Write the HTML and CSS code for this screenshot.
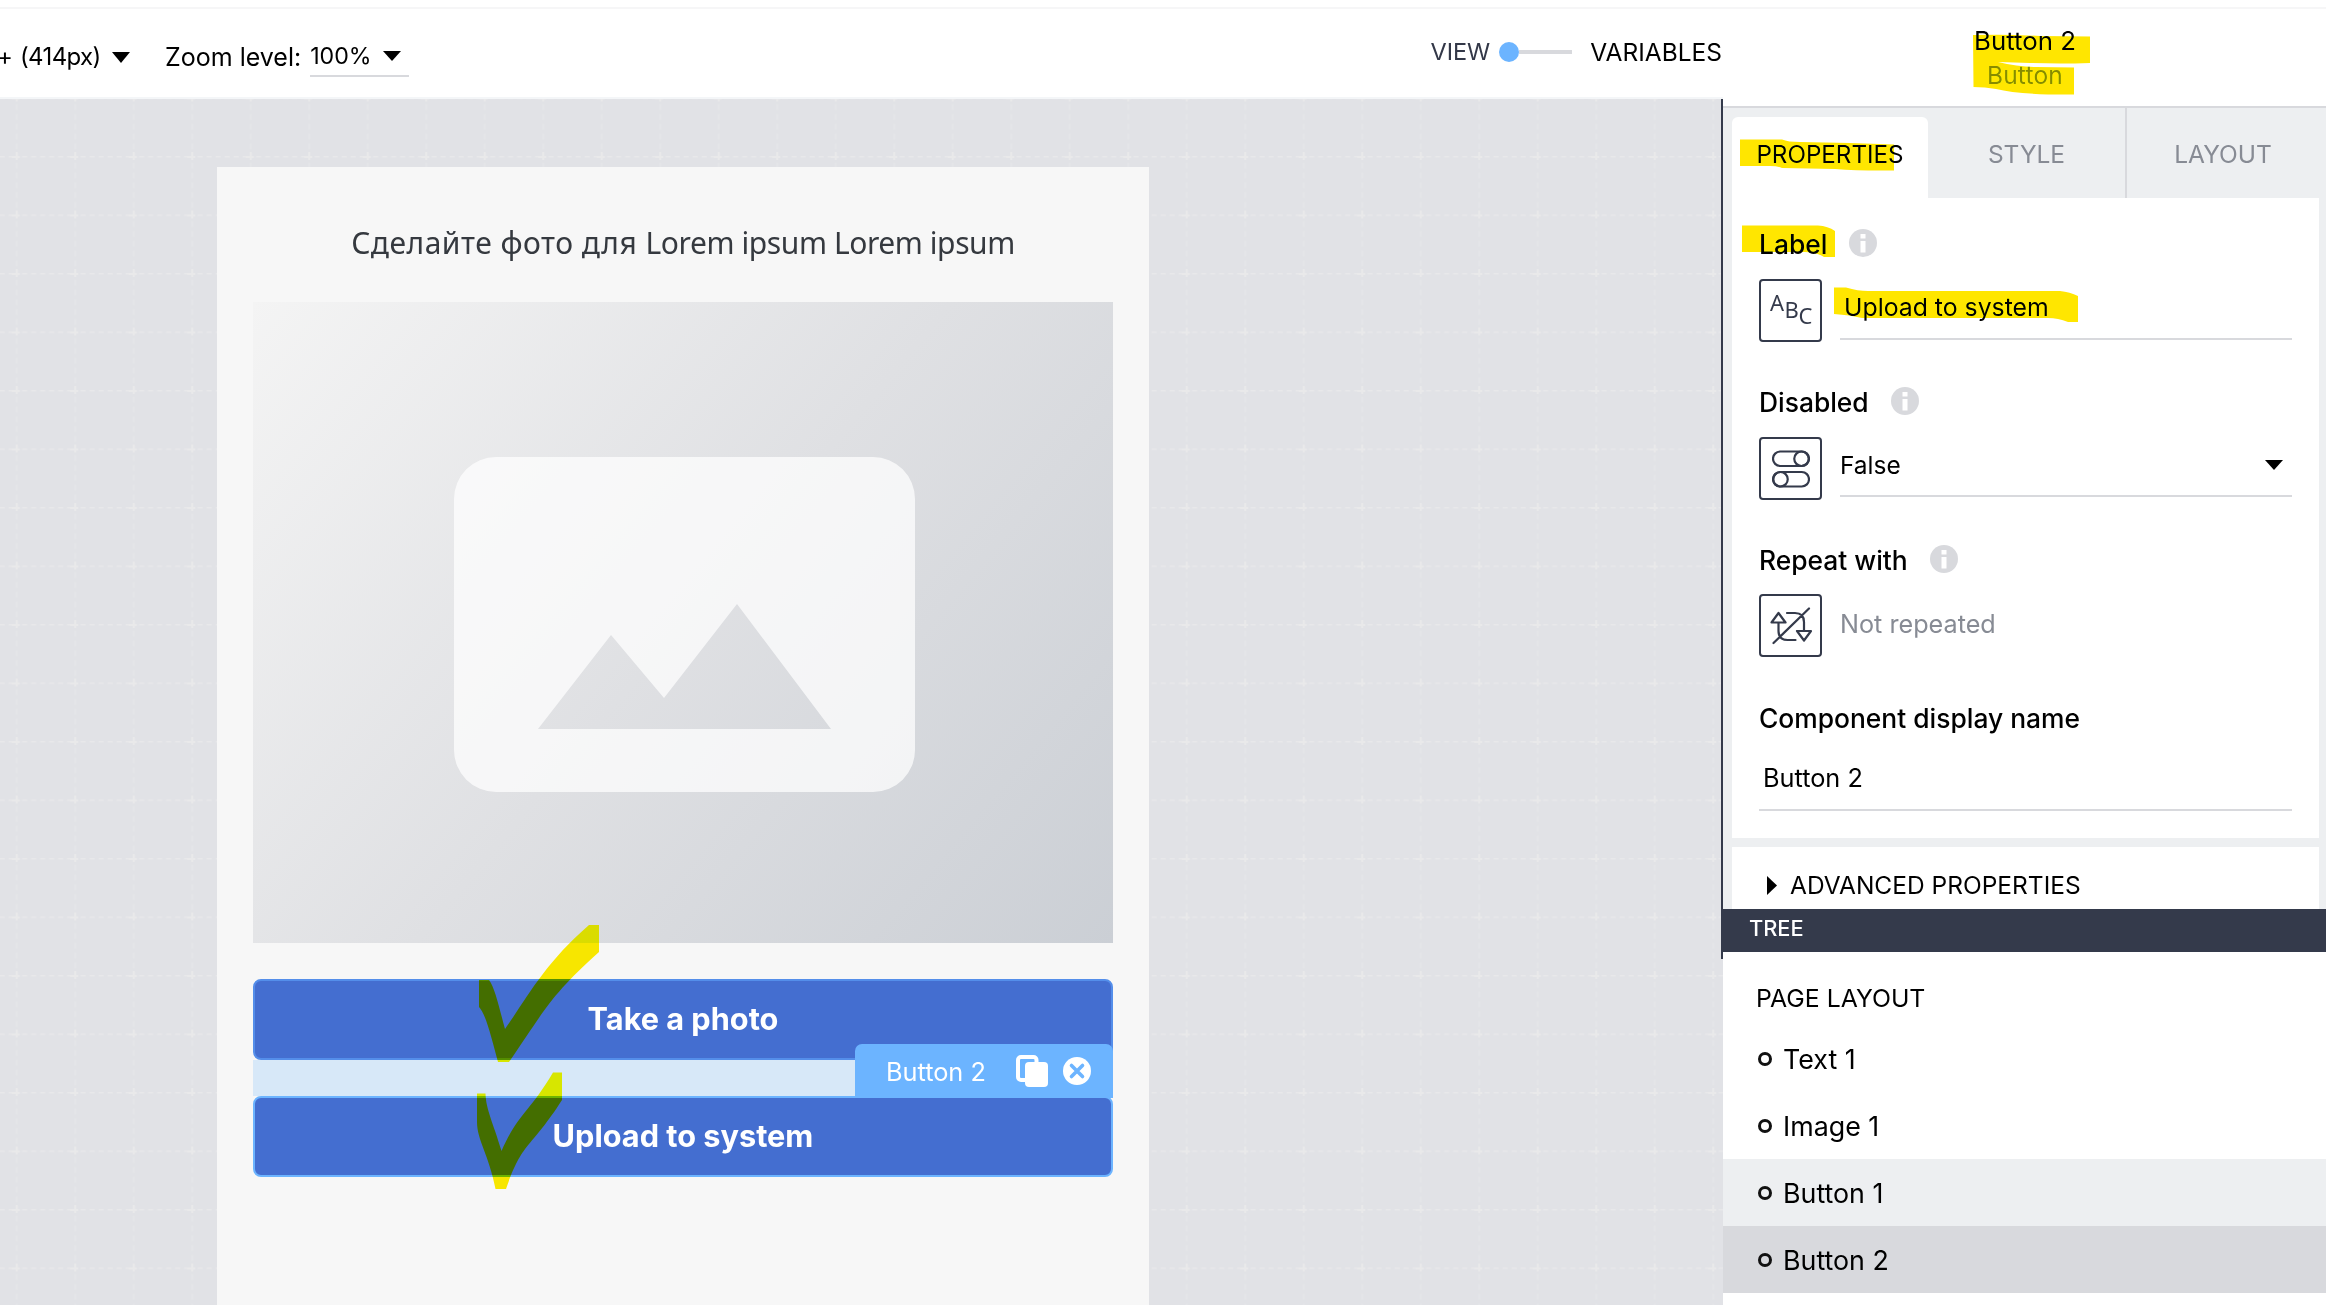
FILE: index.html
```html
<!DOCTYPE html>
<html lang="en">
<head>
<meta charset="utf-8">
<title>Page builder</title>
<link rel="stylesheet" href="styles.css">
</head>
<body>
<div class="app">
  <header class="topbar">
    <div class="toolbar">
      <div class="device">+ <span class="device-size">(414px)</span><svg class="caret caret-lg" viewBox="0 0 18 11"><path d="M0 0h18L9 11z"/></svg></div>
      <div class="zoom">Zoom level:
        <div class="zoom-select">100%<svg class="caret" viewBox="0 0 18 10"><path d="M0 0h18L9 10z"/></svg></div>
      </div>
      <div class="mode">
        <span class="mode-view">VIEW</span>
        <span class="switch"><i class="knob"></i><i class="track"></i></span>
        <span>VARIABLES</span>
      </div>
    </div>
    <div class="component-title">
      <div class="component-name">Button 2</div>
      <div class="component-type">Button</div>
    </div>
  </header>

  <main class="canvas">
    <svg class="grid-lines" width="100%" height="100%">
      <defs>
        <pattern id="grid" x="15.7" y="57" width="58.5" height="58.5" patternUnits="userSpaceOnUse">
          <path d="M0 0h58.5" stroke="#e8e8ea" stroke-width="3" stroke-dasharray="5 4" stroke-dashoffset="2.5"/>
          <path d="M0 0v58.5" stroke="#e4e5e8" stroke-width="4" stroke-dasharray="6 3.75" stroke-dashoffset="3"/>
          <path d="M0 0h4M54.5 0h4M0 0v4M0 54.5v4" stroke="#e9e9ea" stroke-width="4"/>
        </pattern>
      </defs>
      <rect width="100%" height="100%" fill="url(#grid)"/>
    </svg>
    <section class="page">
      <p class="page-text"><span class="wide">Сделайте фото для </span><span class="narrow">Lorem ipsum Lorem ipsum</span></p>
      <div class="placeholder">
        <svg width="461" height="335" viewBox="0 0 461 335">
          <path fill="#fff" fill-opacity=".72" fill-rule="evenodd" d="M42 0H419A42 42 0 0 1 461 42V293A42 42 0 0 1 419 335H42A42 42 0 0 1 0 293V42A42 42 0 0 1 42 0ZM84 272H377L283 147L210 241L157 178Z"/>
        </svg>
      </div>
      <button class="btn">Take a photo</button>
      <div class="spacer">
        <div class="tag">
          <span>Button 2</span>
          <svg class="icon-copy" width="32" height="32" viewBox="0 0 32 32"><path d="M9 25H5a3 3 0 0 1-3-3V5a3 3 0 0 1 3-3h12.500a3 3 0 0 1 3 3v3" fill="none" stroke="#fff" stroke-width="4"/><rect x="9" y="7" width="23" height="25" rx="4" fill="#fff"/></svg>
          <svg class="icon-close" width="28" height="28" viewBox="0 0 28 28"><circle cx="14" cy="14" r="14" fill="#fff"/><path d="M8.500 8.500l11 11M19.500 8.500l-11 11" stroke="#6cb4ff" stroke-width="3.600" stroke-linecap="round"/></svg>
        </div>
      </div>
      <button class="btn btn-selected">Upload to system</button>
    </section>
  </main>

  <aside class="panel">
    <nav class="tabs">
      <div class="tab tab-active">PROPERTIES</div>
      <div class="tab">STYLE</div>
      <div class="tab tab-last">LAYOUT</div>
    </nav>
    <div class="panel-body">
      <div class="card">
        <div class="group">
          <h3><span>Label</span> <svg class="info" viewBox="0 0 28 28"><circle cx="14" cy="14" r="14"/><path d="M11.500 5h5v4.500h-5zM11.500 12h5v11.500h-5z"/></svg></h3>
          <div class="field">
            <div class="box"><svg class="abc" width="42" height="40" viewBox="0 0 42 40"><text x="0" y="20">A</text><text x="14.500" y="27">B</text><text x="28.500" y="33">C</text></svg></div>
            <div class="value value-text">Upload to system</div>
          </div>
        </div>
        <div class="group">
          <h3><span>Disabled</span> <svg class="info" viewBox="0 0 28 28"><circle cx="14" cy="14" r="14"/><path d="M11.500 5h5v4.500h-5zM11.500 12h5v11.500h-5z"/></svg></h3>
          <div class="field">
            <div class="box"><svg class="line-icon" width="38" height="38" viewBox="0 0 38 38"><rect x="1" y="1.500" width="36" height="14.500" rx="7.250"/><circle cx="29.500" cy="8.750" r="7.250"/><rect x="1" y="22" width="36" height="14.500" rx="7.250"/><circle cx="8.500" cy="29.250" r="7.250"/></svg></div>
            <div class="value">False<svg class="caret" viewBox="0 0 18 10"><path d="M0 0h18L9 10z"/></svg></div>
          </div>
        </div>
        <div class="group">
          <h3><span>Repeat with</span> <svg class="info" viewBox="0 0 28 28"><circle cx="14" cy="14" r="14"/><path d="M11.500 5h5v4.500h-5zM11.500 12h5v11.500h-5z"/></svg></h3>
          <div class="field">
            <div class="box"><svg class="line-icon" width="42" height="38" viewBox="0 0 42 38"><path d="M1.500 15.500L8.500 6l7 9.500zM8.500 15.500V24q0 9 9 9h8M17 6h8q9 0 9 9v9M27 24h14l-7 9.500zM3.500 36L39 1.500"/></svg></div>
            <div class="value value-empty">Not repeated</div>
          </div>
        </div>
        <div class="group">
          <h3><span>Component display name</span></h3>
          <div class="name-input">Button 2</div>
        </div>
      </div>
      <div class="card advanced"><svg width="10" height="19" viewBox="0 0 10 19"><path d="M0 0l10 9.500L0 19z"/></svg>ADVANCED PROPERTIES</div>
    </div>
    <div class="tree-bar">TREE</div>
    <div class="tree">
      <div class="tree-title">PAGE LAYOUT</div>
      <div class="node"><i></i>Text 1</div>
      <div class="node"><i></i>Image 1</div>
      <div class="node node-hover"><i></i>Button 1</div>
      <div class="node node-selected"><i></i>Button 2</div>
    </div>
  </aside>

  <svg class="marker" width="2326" height="1305" viewBox="0 0 2326 1305">
    <path d="M1973 35Q2010 34 2040 36L2090 36.500V63Q2060 64 2030 63L1998 62Q2018 67 2036 67L2074 67.500V94.500Q2020 95 1996 89Q1985 87 1973.500 87Z"/>
    <path d="M1740 139.500H1782Q1788 142 1800 142L1850 143L1894 144.500V170.500Q1860 171 1835 169L1782 168Q1778 166 1770 166H1740Z"/>
    <path d="M1742 225.500H1818Q1828 226 1835 231V257H1824Q1816 252 1804 252H1742Z"/>
    <path d="M1834 287.500H1846Q1858 291 1868 291H2060Q2070 292 2078 296V322H2068Q2058 318 2048 318H1862Q1850 315 1834 314Z"/>
    <path d="M479 980H489C495 988 499 1007 505 1029C527 998 544 964 589 925H599V952C549 997 545 1010 509 1062H498C492 1040 486 1014 479 1007Z"/>
    <path d="M477 1093.500H485.500C486 1110 493 1122 501.500 1151C517 1115 529 1113 553 1072.500H562V1100C530 1150 523 1140 506 1189H495.500C489 1155 477 1140 477 1122Z"/>
  </svg>
</div>
</body>
</html>
```
FILE: styles.css
```css
* { box-sizing: border-box; }

body {
  margin: 0;
  font-family: "Inter", "Liberation Sans", sans-serif;
  font-size: 24.5px;
  color: #000;
  background: #fff;
}

.app {
  position: relative;
  display: grid;
  grid-template-columns: 1723px 1fr;
  grid-template-rows: 99px 1206px;
  height: 1305px;
  overflow: hidden;
  white-space: nowrap;
}

/* Top bar */
.topbar {
  grid-column: 1 / 3;
  display: grid;
  grid-template-columns: 1723px 1fr;
  margin-top: 7px;
  border-top: 2px solid #f6f6f7;
}
.toolbar {
  display: flex;
  align-items: flex-start;
  border-bottom: 2px solid #f4f6f8;
  padding-top: 28px;
  line-height: 40px;
}
.device { display: flex; align-items: center; width: 165px; font-size: 24px; margin-left: -3px; gap: 7px; }
.device-size { letter-spacing: -.6px; margin-right: 4px; }
.zoom { display: flex; font-size: 25px; gap: 9px; margin-left: 3px; }
.zoom-select {
  display: flex;
  align-items: center;
  gap: 11px;
  width: 99px;
  height: 40px;
  border-bottom: 2px solid #d8d9dd;
  font-size: 23.200px;
}
.caret { width: 18px; height: 10px; fill: #000; }
.caret-lg { height: 11px; }
.mode { display: flex; align-items: center; margin: -5px 1px 0 auto; line-height: 40px; }
.mode-view { color: #333848; font-size: 23.5px; }
.switch { display: flex; align-items: center; margin: 0 18px 0 9px; }
.knob { width: 20px; height: 20px; border-radius: 50%; background: #6cb4ff; }
.track { width: 53px; height: 4px; background: #d8d9dd; }

.component-title { text-align: center; padding: 15px 0 0 1px; }
.component-name { font-size: 25.800px; line-height: 34px; }
.component-type { line-height: 34px; color: #878b94; letter-spacing: .2px; }

/* Canvas */
.canvas { position: relative; background: #e1e2e6; padding: 68px 0 0 217px; }
.canvas::after {
  content: "";
  position: absolute;
  top: 0;
  right: 0;
  width: 2px;
  height: 860px;
  background: #343a4b;
}
.grid-lines { position: absolute; inset: 0; }
.page {
  position: relative;
  width: 932px;
  height: 1138px;
  padding: 55px 36px 0;
  background: #f7f7f7;
}
.page-text {
  margin: 0 0 39px;
  font: 30px/41px "Noto Sans", sans-serif;
  text-align: center;
  color: #35393f;
}
.page-text .wide { letter-spacing: .5px; }
.page-text .narrow { letter-spacing: -.42px; }
.placeholder {
  display: flex;
  justify-content: center;
  align-items: center;
  height: 641px;
  margin-bottom: 36px;
  padding: 4px 0 0 3px;
  background: linear-gradient(130deg, #f4f4f4 0%, #dfe0e3 50%, #cbcfd5 100%);
}
.btn {
  display: block;
  width: 860px;
  height: 81px;
  padding: 0 0 2px;
  border: 2px solid #548eea;
  border-radius: 8px;
  background: #446ed0;
  color: #fff;
  font: bold 30.7px "Inter", sans-serif;
}
.btn-selected { border-color: #6cb4ff; }
.spacer { position: relative; height: 36px; background: #d7e8f8; }
.tag {
  position: absolute;
  right: 0;
  bottom: -2px;
  z-index: 1;
  display: flex;
  align-items: center;
  width: 258px;
  height: 54px;
  padding-left: 31px;
  border-radius: 7px 7px 0 0;
  background: #6cb4ff;
  color: #fff;
  font-size: 25.300px;
}
.icon-copy { margin-left: 30px; }
.icon-close { margin-left: 15px; }

/* Properties panel */
.panel { display: flex; flex-direction: column; margin-top: 7px; }
.tabs {
  display: grid;
  grid-template-columns: 196px 197px 194px;
  height: 92px;
  padding: 0 7px 0 9px;
  border-top: 2px solid #d8d9dd;
  background: #edeff1;
}
.tab { padding-top: 26px; line-height: 40px; text-align: center; color: #878b94; }
.tab-active {
  margin-top: 9px;
  padding-top: 18px;
  border-radius: 6px 6px 0 0;
  background: #fff;
  color: #000;
  font-size: 24.200px;
}
.tab-last { border-left: 2px solid #d8d9dd; }
.panel-body {
  display: flex;
  flex-direction: column;
  gap: 9px;
  height: 711px;
  padding: 0 7px 0 9px;
  background: #edeff1;
}
.card { height: 640px; padding: 29px 27px 0; background: #fff; }
.group { margin-bottom: 43px; }
.group + .group + .group { margin-bottom: 44px; }
.group h3 {
  display: flex;
  align-items: center;
  gap: 22px;
  margin: 0 0 20px;
  font-size: 26.4px;
  font-weight: 500;
  line-height: 32px;
}
.group h3 span { padding-top: 1px; margin-bottom: -1px; }
.info { width: 28px; height: 28px; fill: #d8d9dd; }
.info path { fill: #fff; }
.field { display: flex; gap: 18px; }
.group:nth-child(3) h3 { margin-bottom: 19px; }
.box {
  display: flex;
  align-items: center;
  justify-content: center;
  width: 63px;
  height: 63px;
  border: 2px solid #343a4b;
  border-radius: 4px;
}
.abc { overflow: visible; }
.box text { font: 22px "Noto Sans", sans-serif; fill: #343a4b; }
.line-icon { fill: none; stroke: #343a4b; stroke-width: 2.2; stroke-linejoin: round; stroke-linecap: round; }
.value {
  display: flex;
  flex: 1;
  align-items: center;
  justify-content: space-between;
  height: 60px;
  padding: 0 9px 3px 0;
  border-bottom: 2px solid #d8d9dd;
}
.value-text { height: 61px; padding-left: 4px; font-size: 24.800px; }
.value-empty { border: 0; padding-bottom: 0; color: #878b94; font-size: 25.200px; }
.name-input {
  height: 64px;
  padding-left: 4px;
  border-bottom: 2px solid #d8d9dd;
  line-height: 62px;
  font-size: 25.300px;
}
.group:last-child h3 { margin-bottom: 14px; }
.advanced { display: flex; align-items: center; gap: 13px; height: 62px; padding: 14px 0 0 35px; }

/* Tree */
.tree-bar {
  height: 43px;
  padding-left: 26px;
  background: #343a4b;
  color: #fff;
  font-size: 21.8px;
  font-weight: 500;
  line-height: 39px;
}
.tree-title { height: 73px; padding: 26px 0 0 33px; line-height: 40px; font-size: 24.800px; }
.node {
  display: flex;
  align-items: center;
  gap: 11px;
  height: 67px;
  padding-left: 35px;
  font-size: 26.8px;
}
.node i { width: 14px; height: 14px; border: 3px solid #111; border-radius: 50%; }
.node-hover { background: #edeff1; }
.node-selected { background: #d8d9dd; }

/* Highlighter strokes over the interface */
.marker { position: absolute; inset: 0; fill: #ffe600; mix-blend-mode: darken; pointer-events: none; z-index: 2; }
```
